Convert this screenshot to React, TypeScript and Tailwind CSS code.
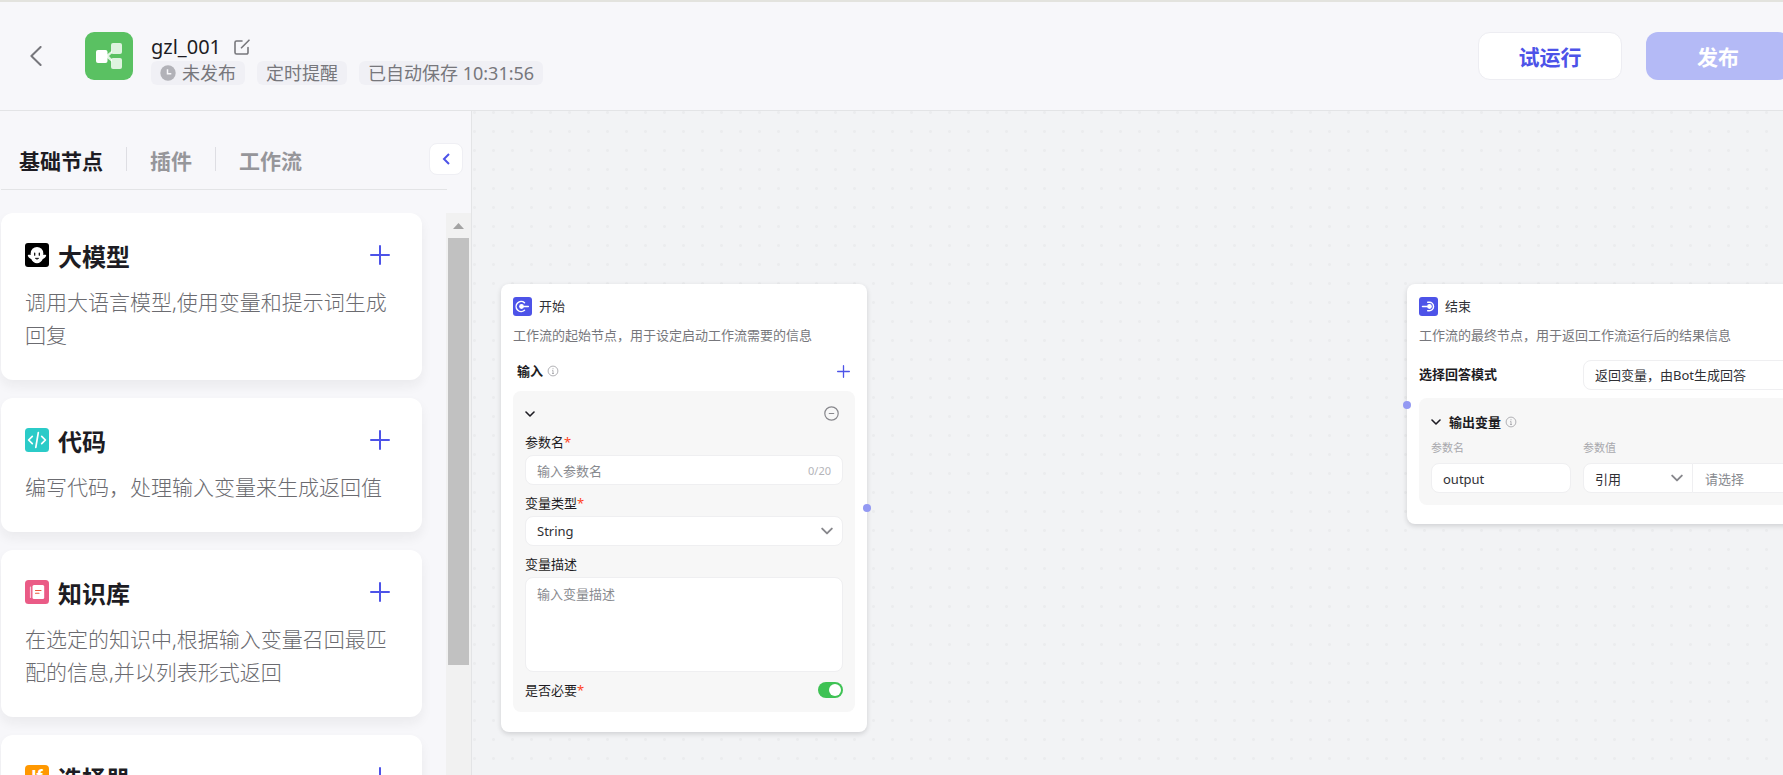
import React from "react";

type IconProps = { className?: string };

const ChevronLeft = ({ className }: IconProps) => (
  <svg viewBox="0 0 12 20" fill="none" stroke="currentColor" strokeWidth="2" strokeLinecap="round" strokeLinejoin="round" className={className} aria-hidden="true">
    <path d="M10.6 1 1.4 10l9.2 9" />
  </svg>
);

const ChevronDown = ({ className }: IconProps) => (
  <svg viewBox="0 0 10 10" fill="none" stroke="currentColor" strokeWidth="1.6" strokeLinecap="round" strokeLinejoin="round" className={className} aria-hidden="true">
    <path d="m1 3 4 4 4-4" />
  </svg>
);

const Plus = ({ className }: IconProps) => (
  <svg viewBox="0 0 20 20" fill="none" stroke="currentColor" strokeWidth="2" strokeLinecap="round" className={className} aria-hidden="true">
    <path d="M10 1v18M1 10h18" />
  </svg>
);

const Info = ({ className }: IconProps) => (
  <svg viewBox="0 0 12 12" fill="none" stroke="currentColor" className={className} aria-hidden="true">
    <circle cx="6" cy="6" r="4.9" strokeWidth="0.9" />
    <path d="M6 3.2v1M5.2 5.4H6v2.9M5 8.5h2" strokeWidth="0.9" />
  </svg>
);

const WorkflowLogo = () => (
  <svg viewBox="0 0 48 48" className="size-12 shrink-0" aria-hidden="true">
    <rect width="48" height="48" rx="9" fill="#5ac162" />
    <g fill="#fff" fillOpacity="0.8">
      <rect x="26" y="11" width="11" height="11" rx="2" />
      <rect x="26" y="26" width="11" height="11" rx="2" />
      <path d="m22 22.500 5-4v2.800L24 24l3 3.200V30l-5-4z" />
    </g>
    <rect x="11" y="18" width="11.500" height="13" rx="2" fill="#fff" />
  </svg>
);

const EditIcon = () => (
  <svg viewBox="0 0 16 16" fill="none" stroke="currentColor" strokeWidth="1.600" strokeLinecap="round" strokeLinejoin="round" className="size-4" aria-hidden="true">
    <path d="M8 2H2.500A1.500 1.500 0 0 0 1 3.500v10A1.500 1.500 0 0 0 2.500 15h10a1.500 1.500 0 0 0 1.500-1.500V8.500" />
    <path d="M7.500 8.800 15 1.200" />
  </svg>
);

const ClockIcon = () => (
  <svg viewBox="0 0 16 16" className="size-4 shrink-0" aria-hidden="true">
    <circle cx="8" cy="8" r="7.700" fill="#b2b2b8" />
    <path d="M7.500 4.200v4.600h3.800" fill="none" stroke="#f7f7fa" strokeWidth="1.500" />
  </svg>
);

const ModelIcon = () => (
  <svg viewBox="0 0 24 24" className="size-6 shrink-0" aria-hidden="true">
    <rect width="24" height="24" rx="3" fill="#000" />
    <circle cx="12" cy="10.300" r="6.300" fill="#fff" />
    <path d="M5.700 11.800H3.600c-.6 0-.9.400-.7.900.6 1.700 1.800 2.800 3.300 3.200 1.100 2.500 3.200 4.300 5.800 4.300s4.700-1.800 5.800-4.300c1.500-.4 2.700-1.500 3.300-3.200.2-.5-.1-.9-.7-.9h-2.100z" fill="#fff" />
    <path d="M9.700 10v2.200M14.300 10v2.200" stroke="#000" strokeWidth="1.200" strokeLinecap="round" />
    <path d="M10.200 15.200c.7 1.300 2.900 1.300 3.600 0z" fill="#000" stroke="#000" strokeWidth="0.5" strokeLinejoin="round" />
  </svg>
);

const CodeIcon = () => (
  <svg viewBox="0 0 24 24" className="size-6 shrink-0" aria-hidden="true">
    <rect width="24" height="24" rx="3.500" fill="#2bcbc8" />
    <path d="M7.300 8.300 3.600 12l3.700 3.700M16.700 8.300l3.700 3.700-3.700 3.700M13.300 4.700 10.800 19.300" fill="none" stroke="#fff" strokeWidth="1.700" strokeLinecap="round" strokeLinejoin="round" />
  </svg>
);

const KnowledgeIcon = () => (
  <svg viewBox="0 0 24 24" className="size-6 shrink-0" aria-hidden="true">
    <rect width="24" height="24" rx="3.500" fill="#ea5b86" />
    <path d="M5.500 7v10.500" stroke="#f9cbd9" strokeWidth="1.200" strokeLinecap="round" />
    <rect x="7.500" y="5" width="11.700" height="14" rx="1.500" fill="#fff" />
    <path d="M10.500 10.500h5.500M10.500 13.300h3.500" stroke="#ea5b3c" strokeWidth="1.100" strokeLinecap="round" />
  </svg>
);

const SelectorIcon = () => (
  <span className="flex size-6 shrink-0 items-center justify-center rounded bg-[#ff9800] font-[Roboto,sans-serif] text-lg font-bold leading-6 text-white" aria-hidden="true">
    If
  </span>
);

const StartIcon = () => (
  <svg viewBox="0 0 19 19" className="size-[19px] shrink-0" aria-hidden="true">
    <rect width="19" height="19" rx="3" fill="#4d53e8" />
    <path d="M11.500 5.800a5 5 0 1 0 0 7.400" fill="none" stroke="#fff" strokeWidth="1.500" strokeLinecap="round" />
    <circle cx="8.500" cy="9.500" r="2.400" fill="#fff" />
    <path d="M8.500 9.500h6.800" stroke="#fff" strokeWidth="1.500" strokeLinecap="round" />
  </svg>
);

const EndIcon = () => (
  <svg viewBox="0 0 19 19" className="size-[19px] shrink-0" aria-hidden="true">
    <rect width="19" height="19" rx="3" fill="#4d53e8" />
    <path d="M8.700 5.300h1.600a4.200 4.200 0 1 1 0 8.400H8.700" fill="none" stroke="#fff" strokeWidth="1.500" strokeLinecap="round" />
    <circle cx="10.500" cy="9.500" r="2.400" fill="#fff" />
    <path d="M3.500 9.500h7" stroke="#fff" strokeWidth="1.500" strokeLinecap="round" />
  </svg>
);

const nodeTypes = [
  { name: "大模型", text: "调用大语言模型,使用变量和提示词生成回复", icon: <ModelIcon /> },
  { name: "代码", text: "编写代码，处理输入变量来生成返回值", icon: <CodeIcon /> },
  { name: "知识库", text: "在选定的知识中,根据输入变量召回最匹配的信息,并以列表形式返回", icon: <KnowledgeIcon /> },
  { name: "选择器", text: "", icon: <SelectorIcon /> },
];

const field = "h-[30px] rounded-lg border border-[#efeff1] bg-white px-[11px] pt-px text-[13px] text-[#2f3035] outline-none placeholder:text-[#888a8f]";

function Tag({ children }: { children: React.ReactNode }) {
  return <span className="flex h-6 items-center gap-[6px] rounded-md bg-[#f0f0f5] px-[9px] leading-6">{children}</span>;
}

function Header() {
  return (
    <header className="flex h-[111px] shrink-0 items-center border-b border-t-2 border-b-[#e3e4e6] border-t-[#e3e3de] bg-[#f7f7fa] pl-[30px]">
      <button type="button" aria-label="返回" className="mr-[43px] text-[#77777c]">
        <ChevronLeft className="h-5 w-3" />
      </button>
      <WorkflowLogo />
      <div className="ml-[18px] pt-[6px]">
        <div className="flex h-7 items-center gap-[13px]">
          <h1 className="text-xl leading-7 text-[#1d1c23]">gzl_001</h1>
          <button type="button" aria-label="编辑" className="text-[#77777c]">
            <EditIcon />
          </button>
        </div>
        <div className="flex gap-3 text-lg text-[#77777c]">
          <Tag>
            <ClockIcon />
            未发布
          </Tag>
          <Tag>定时提醒</Tag>
          <Tag>已自动保存 10:31:56</Tag>
        </div>
      </div>
      <div className="-mr-[7px] ml-auto flex shrink-0 gap-6 text-[21px] font-bold">
        <button type="button" className="h-12 w-36 rounded-xl border border-[#ededf2] bg-white pt-[3px] text-[#4d53e8]">
          试运行
        </button>
        <button type="button" className="h-12 w-36 rounded-xl bg-[#b4baf6] pt-[3px] text-white">
          发布
        </button>
      </div>
    </header>
  );
}

function Sidebar() {
  return (
    <aside className="flex w-[472px] shrink-0 flex-col border-r border-[#e3e4e6] bg-[#f7f7fa]">
      <div className="flex h-[78px] shrink-0 items-center justify-between pl-[19px] pr-2 pt-[18px]">
        <nav className="flex items-center gap-[23px] text-[21px] font-bold leading-8 text-[#96969a]">
          <button type="button" className="pt-[3px] text-[#1d1c23]">基础节点</button>
          <span className="h-6 w-px bg-[#dedee3]" />
          <button type="button" className="pt-[3px]">插件</button>
          <span className="h-6 w-px bg-[#dedee3]" />
          <button type="button" className="pt-[3px]">工作流</button>
        </nav>
        <button type="button" aria-label="收起" className="flex h-8 w-[34px] items-center justify-center rounded-lg border border-[#efeff4] bg-white text-[#4d53e8]">
          <svg viewBox="0 0 8 12" fill="none" stroke="currentColor" strokeWidth="2" className="h-3 w-2" aria-hidden="true">
            <path d="M7 1 2 6l5 5" />
          </svg>
        </button>
      </div>
      <div className="ml-px mr-6 h-px shrink-0 bg-[#e3e4e6]" />
      <div className="mt-[23px] flex min-h-0 flex-1 overflow-hidden">
        <ul className="flex flex-1 flex-col gap-[18px] pl-px pr-6">
          {nodeTypes.map((n) => (
            <li key={n.name} className="shrink-0 rounded-xl bg-white px-6 pb-7 pt-6 shadow-[0_6px_12px_rgba(29,28,35,0.06)]">
              <div className="flex h-9 items-center">
                {n.icon}
                <h2 className="ml-[9px] pt-[3px] text-2xl font-bold leading-9 text-[#1d1c23]">{n.name}</h2>
                <button type="button" aria-label={`添加${n.name}`} className="ml-auto mr-2 text-[#4d53e8]">
                  <Plus className="size-5" />
                </button>
              </div>
              <p className="mt-[13px] text-[21px] font-light leading-[33px] text-[#6b6b70]">{n.text}</p>
            </li>
          ))}
        </ul>
        <div className="flex w-[25px] flex-col items-center bg-[#f1f1f1]" aria-hidden="true">
          <svg viewBox="0 0 25 25" className="size-[25px] shrink-0" fill="#a3a3a3">
            <path d="M7 16h11l-5.500-6z" />
          </svg>
          <div className="h-[427px] w-[21px] bg-[#c1c1c1]" />
        </div>
      </div>
    </aside>
  );
}

function NodeHead({ icon, title, text }: { icon: React.ReactNode; title: string; text: string }) {
  return (
    <>
      <div className="flex h-5 items-center gap-[7px] text-[13px] leading-5 text-[#2f3035]">
        {icon}
        <h2>{title}</h2>
      </div>
      <p className="mt-[9px] whitespace-nowrap text-[13px] leading-5 text-[#77777c]">{text}</p>
    </>
  );
}

function FieldLabel({ htmlFor, required, children }: { htmlFor: string; required?: boolean; children: React.ReactNode }) {
  return (
    <label htmlFor={htmlFor} className="mt-[5px] block text-[13px] leading-[26px] text-[#1d1c23]">
      {children}
      {required && <span className="text-[#ff441e]">*</span>}
    </label>
  );
}

function StartNode() {
  return (
    <section className="absolute left-[29px] top-[173px] w-[366px] rounded-lg bg-white px-3 pb-5 pt-3 shadow-[0_2px_5px_rgba(29,28,35,0.16)]">
      <NodeHead icon={<StartIcon />} title="开始" text="工作流的起始节点，用于设定启动工作流需要的信息" />
      <div className="mt-4 flex h-5 items-center pl-1 pr-[5px]">
        <h3 className="text-[13px] font-bold leading-5 text-[#1d1c23]">输入</h3>
        <Info className="ml-1 size-3 text-[#a8a8ad]" />
        <button type="button" aria-label="添加输入" className="ml-auto text-[#4d53e8]">
          <Plus className="size-[13px]" />
        </button>
      </div>
      <div className="mt-[10px] rounded-lg bg-[#f7f7f7] px-3 pb-[9px] pt-3">
        <div className="flex h-[21px] items-center justify-between pr-1">
          <button type="button" aria-label="折叠" className="text-[#1d1c23]">
            <ChevronDown className="size-[10px]" />
          </button>
          <button type="button" aria-label="删除" className="text-[#87878c]">
            <svg viewBox="0 0 15 15" fill="none" stroke="currentColor" strokeWidth="1.200" strokeLinecap="round" className="size-[15px]" aria-hidden="true">
              <circle cx="7.500" cy="7.500" r="6.700" />
              <path d="M5.300 7.500h4.400" />
            </svg>
          </button>
        </div>
        <FieldLabel htmlFor="param-name" required>参数名</FieldLabel>
        <div className="relative">
          <input id="param-name" type="text" placeholder="输入参数名" className={`${field} block w-full`} />
          <span className="pointer-events-none absolute inset-y-0 right-3 text-[11px] leading-8 text-[#b4b4b9]">0/20</span>
        </div>
        <FieldLabel htmlFor="param-type" required>变量类型</FieldLabel>
        <div className="relative text-[#87878c]">
          <select id="param-type" className={`${field} block w-full appearance-none`}>
            <option>String</option>
          </select>
          <ChevronDown className="pointer-events-none absolute right-[10px] top-[9px] size-3" />
        </div>
        <FieldLabel htmlFor="param-desc">变量描述</FieldLabel>
        <textarea
          id="param-desc"
          placeholder="输入变量描述"
          className="block h-[95px] w-full resize-none rounded-lg border border-[#efeff1] bg-white px-[11px] py-[6px] text-[13px] leading-5 outline-none placeholder:text-[#888a8f]"
        />
        <div className="flex items-center justify-between">
          <FieldLabel htmlFor="param-required" required>是否必要</FieldLabel>
          <input
            id="param-required"
            type="checkbox"
            role="switch"
            defaultChecked
            className="mt-[5px] flex h-4 w-[25px] appearance-none items-center rounded-full bg-[#3ec254] px-0.5 before:ml-auto before:size-3 before:rounded-full before:bg-white"
          />
        </div>
      </div>
      <span className="absolute -right-1 top-[220px] size-2 rounded-full bg-[#9399f3]" />
    </section>
  );
}

function EndNode() {
  return (
    <section className="absolute left-[935px] top-[173px] w-[480px] rounded-lg bg-white px-3 pb-[19px] pt-3 shadow-[0_2px_5px_rgba(29,28,35,0.16)]">
      <NodeHead icon={<EndIcon />} title="结束" text="工作流的最终节点，用于返回工作流运行后的结果信息" />
      <div className="mt-[15px] flex items-center">
        <label htmlFor="answer-mode" className="w-[164px] shrink-0 text-[13px] font-bold text-[#1d1c23]">选择回答模式</label>
        <select id="answer-mode" className={`${field} flex-1 appearance-none`}>
          <option>返回变量，由Bot生成回答</option>
        </select>
      </div>
      <div className="mt-2 rounded-lg bg-[#f7f7f7] px-3 pb-3 pt-[14px]">
        <div className="flex h-5 items-center text-[#1d1c23]">
          <button type="button" aria-label="折叠" className="mr-2">
            <ChevronDown className="size-[10px]" />
          </button>
          <h3 className="text-[13px] font-bold leading-5">输出变量</h3>
          <Info className="ml-1 size-3 text-[#a8a8ad]" />
        </div>
        <div className="mt-2 grid grid-cols-[140px_1fr] gap-x-3 gap-y-[7px] text-[11px] leading-4 text-[#a8a8ad]">
          <label htmlFor="out-name">参数名</label>
          <label htmlFor="out-kind">参数值</label>
          <input id="out-name" type="text" defaultValue="output" className={`${field} w-full`} />
          <div className="flex">
            <div className="relative w-[110px] shrink-0 text-[#87878c]">
              <select id="out-kind" className={`${field} block w-full appearance-none rounded-r-none`}>
                <option>引用</option>
              </select>
              <ChevronDown className="pointer-events-none absolute right-[10px] top-[9px] size-3" />
            </div>
            <select aria-label="引用变量" className="h-[30px] min-w-0 flex-1 appearance-none rounded-r-lg border border-l-0 border-[#efeff1] bg-white px-3 pt-px text-[13px] text-[#888a8f] outline-none">
              <option>请选择</option>
            </select>
          </div>
        </div>
      </div>
      <span className="absolute -left-1 top-[117px] size-2 rounded-full bg-[#9399f3]" />
    </section>
  );
}

export default function App() {
  return (
    <div className="flex h-screen flex-col overflow-hidden font-['Noto_Sans','Noto_Sans_CJK_SC',sans-serif]">
      <Header />
      <div className="flex min-h-0 flex-1">
        <Sidebar />
        <main className="relative min-w-0 flex-1 overflow-hidden bg-[#f2f3f5] bg-[radial-gradient(circle,#ebecee_1px,transparent_2px)] bg-[length:19px_19px] bg-[position:-7px_-8px]">
          <StartNode />
          <EndNode />
        </main>
      </div>
    </div>
  );
}
